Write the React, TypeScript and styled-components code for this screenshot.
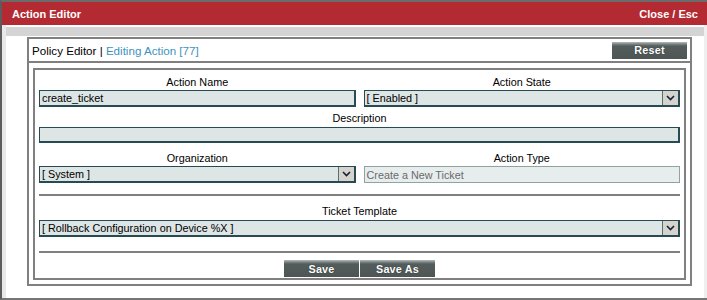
import React from 'react';
import styled, { createGlobalStyle } from 'styled-components';

const GlobalStyle = createGlobalStyle`
  body {
    margin: 0;
    font-family: "Liberation Sans", Arial, sans-serif;
    background: #fff;
  }
  * {
    box-sizing: border-box;
  }
`;

const Window = styled.div`
  width: 707px;
  height: 300px;
  display: flex;
  flex-direction: column;
  border-top: 2px solid #6b6b6b;
  border-left: 2px solid #5c5c5c;
  border-bottom: 2px solid #767676;
  background: #fff;
`;

const TitleBar = styled.div`
  height: 23px;
  flex-shrink: 0;
  display: flex;
  align-items: center;
  justify-content: space-between;
  padding: 0 9px 0 10px;
  background: #b42a32;
  color: #fff;
  font-size: 11px;
  font-weight: 700;
`;

const Content = styled.div`
  flex: 1;
  display: flex;
`;

const Strip = styled.div<{ $w: number; $bg: string }>`
  width: ${(p) => p.$w}px;
  flex-shrink: 0;
  background: ${(p) => p.$bg};
`;

const Main = styled.div`
  flex: 1;
  display: flex;
  flex-direction: column;
  padding-top: 2px;
`;

const Band = styled.div`
  height: 9px;
  background: #d4d4d4;
`;

const Panel = styled.div`
  margin: 1px 12px 0 21px;
  border: 2px solid #808080;
  display: flex;
  flex-direction: column;
`;

const PanelHeader = styled.div`
  height: 24px;
  display: flex;
  align-items: center;
  justify-content: space-between;
  padding: 0 3px;
  border-bottom: 2px solid #808080;
  font-size: 11.6px;
  color: #000;
`;

const Crumb = styled.span`
  color: #3d93c0;
`;

const PanelBody = styled.div`
  padding: 5px 4px 4px;
`;

const InnerBox = styled.div`
  border: 2px solid #808080;
  padding: 5px 4px 1px;
  display: flex;
  flex-direction: column;
`;

const Row = styled.div<{ $top?: number }>`
  display: grid;
  grid-template-columns: 1fr 1fr;
  column-gap: 8px;
  margin-top: ${(p) => p.$top ?? 0}px;
`;

const Field = styled.div<{ $top?: number }>`
  display: flex;
  flex-direction: column;
  margin-top: ${(p) => p.$top ?? 0}px;
`;

const Label = styled.div<{ $h?: number }>`
  height: ${(p) => p.$h ?? 15}px;
  line-height: 15px;
  text-align: center;
  font-size: 10.8px;
  color: #000;
`;

const TextBox = styled.div<{ $h?: number; $readOnly?: boolean }>`
  height: ${(p) => p.$h ?? 17}px;
  display: flex;
  align-items: center;
  padding-left: 2px;
  font-size: 10.8px;
  background: ${(p) => (p.$readOnly ? '#e7eded' : '#dde5e5')};
  color: ${(p) => (p.$readOnly ? '#6a6a6a' : '#000')};
  border: 1px solid ${(p) => (p.$readOnly ? '#8fa3a3' : '#274b55')};
  border-right-width: ${(p) => (p.$readOnly ? 1 : 2)}px;
  border-bottom-width: ${(p) => (p.$readOnly ? 1 : 2)}px;
`;

const SelectBox = styled.div`
  height: 17px;
  display: flex;
  align-items: center;
  padding-left: 2px;
  font-size: 10.8px;
  background: #dde5e5;
  border: 1px solid #274b55;
  border-right-width: 2px;
  border-bottom-width: 2px;
`;

const SelectText = styled.span`
  flex: 1;
`;

const Arrow = styled.div`
  width: 16px;
  height: 14px;
  display: flex;
  align-items: center;
  justify-content: center;
  background: #d6d2cc;
  border-left: 1px solid #56706f;
`;

const Separator = styled.div<{ $top: number }>`
  height: 2px;
  margin-top: ${(p) => p.$top}px;
  background: #808080;
`;

const Buttons = styled.div`
  display: flex;
  justify-content: center;
  gap: 1px;
  margin-top: 7px;
`;

const Button = styled.div<{ $w?: number }>`
  width: ${(p) => p.$w ?? 75}px;
  height: 17px;
  display: flex;
  align-items: center;
  justify-content: center;
  color: #fff;
  font-size: 10.8px;
  font-weight: 700;
  letter-spacing: 0.2px;
  background: linear-gradient(#b4bcbc 0px, #7d8686 2px, #545c5c 4px, #4d5555 100%);
  text-shadow: 0 0 1px #222;
`;

const Chevron = () => (
  <svg width="9" height="6" viewBox="0 0 9 6">
    <path d="M1 1 L4.5 4.5 L8 1" stroke="#14203c" strokeWidth="1.6" fill="none" />
  </svg>
);

const Select = ({ value }: { value: string }) => (
  <SelectBox>
    <SelectText>{value}</SelectText>
    <Arrow>
      <Chevron />
    </Arrow>
  </SelectBox>
);

const App = () => {
  return (
    <>
      <GlobalStyle />
      <Window>
        <TitleBar>
          <span>Action Editor</span>
          <span>Close / Esc</span>
        </TitleBar>
        <Content>
          <Strip $w={4} $bg="#e8e8e8" />
          <Main>
            <Band />
            <Panel>
              <PanelHeader>
                <span>
                  Policy Editor | <Crumb>Editing Action [77]</Crumb>
                </span>
                <Button>Reset</Button>
              </PanelHeader>
              <PanelBody>
                <InnerBox>
                  <Row>
                    <Field>
                      <Label>Action Name</Label>
                      <TextBox>create_ticket</TextBox>
                    </Field>
                    <Field>
                      <Label>Action State</Label>
                      <Select value="[ Enabled ]" />
                    </Field>
                  </Row>
                  <Field $top={4}>
                    <Label $h={16}>Description</Label>
                    <TextBox $h={16} />
                  </Field>
                  <Row $top={8}>
                    <Field>
                      <Label>Organization</Label>
                      <Select value="[ System ]" />
                    </Field>
                    <Field>
                      <Label>Action Type</Label>
                      <TextBox $readOnly>Create a New Ticket</TextBox>
                    </Field>
                  </Row>
                  <Separator $top={11} />
                  <Field $top={8}>
                    <Label $h={16}>Ticket Template</Label>
                    <Select value="[ Rollback Configuration on Device %X ]" />
                  </Field>
                  <Separator $top={14} />
                  <Buttons>
                    <Button>Save</Button>
                    <Button>Save As</Button>
                  </Buttons>
                </InnerBox>
              </PanelBody>
            </Panel>
          </Main>
          <Strip $w={3} $bg="#efefef" />
        </Content>
      </Window>
    </>
  );
};

export default App;
